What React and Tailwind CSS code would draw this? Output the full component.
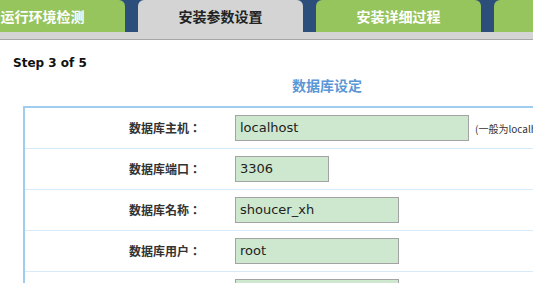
import React from 'react';

const latin = { fontFamily: '"DejaVu Sans", "Noto Sans CJK SC", sans-serif' };
const cjk = { fontFamily: '"Noto Sans CJK SC", "DejaVu Sans", sans-serif' };
const cjkLabel = { fontFamily: '"Noto Sans CJK JP", "Noto Sans CJK SC", sans-serif' };

const tabs = [
  { label: '运行环境检测', active: false },
  { label: '安装参数设置', active: true },
  { label: '安装详细过程', active: false },
  { label: '安装完成', active: false },
];

const rows = [
  { label: '数据库主机：', value: 'localhost', width: 'w-[234px]', hint: '(一般为localhost)' },
  { label: '数据库端口：', value: '3306', width: 'w-[94px]' },
  { label: '数据库名称：', value: 'shoucer_xh', width: 'w-[164px]' },
  { label: '数据库用户：', value: 'root', width: 'w-[164px]' },
  { label: '数据库密码：', value: '', width: 'w-[164px]' },
];

export default function App() {
  return (
    <div className="w-[533px] h-[283px] overflow-hidden bg-white relative">
      {/* Tab strip */}
      <div className="bg-[#2b4e7a] h-[32px] flex gap-[13px] ml-[-40px] w-[700px]" style={cjk}>
        {tabs.map((t) => (
          <div
            key={t.label}
            className={
              'w-[165px] shrink-0 h-[32px] rounded-t-[6px] flex items-center justify-center text-[14px] font-bold ' +
              (t.active ? 'bg-[#d4d4d4] text-[#222]' : 'bg-[#96c45d] text-white')
            }
          >
            {t.label}
          </div>
        ))}
      </div>
      <div className="h-[7px] bg-[#d4d4d4]" />
      <div className="h-[1px] bg-[#a6a6a6]" />

      <div className="pl-[13px] pt-[15px] text-[12px] font-bold text-[#111] leading-[16px]" style={latin}>
        Step 3 of 5
      </div>

      <div className="w-[533px] pl-[292px] pt-[5px] h-[27px] text-[14px] font-bold text-[#5b97d6] leading-[18px]" style={cjk}>
        数据库设定
      </div>

      {/* Form table */}
      <div className="ml-[23px] mt-[8px] w-[560px] border-l-2 border-t-2 border-[#9fcdf0]">
        {rows.map((r) => (
          <div key={r.label} className="h-[41px] flex items-center border-b border-[#d6ebfa]">
            <div className="w-[176px] text-right text-[12px] font-bold text-[#333]" style={cjkLabel}>
              {r.label}
            </div>
            <div className="w-[34px]" />
            <div
              className={r.width + ' h-[26px] mt-[-1px] bg-[#cde8cf] border border-[#a3a3a3] flex items-center pl-[4px] text-[13px] text-[#222]'}
              style={latin}
            >
              {r.value}
            </div>
            {r.hint && (
              <div className="pl-[6px] text-[10px] text-[#333] whitespace-nowrap" style={cjk}>
                {r.hint}
              </div>
            )}
          </div>
        ))}
      </div>
    </div>
  );
}
